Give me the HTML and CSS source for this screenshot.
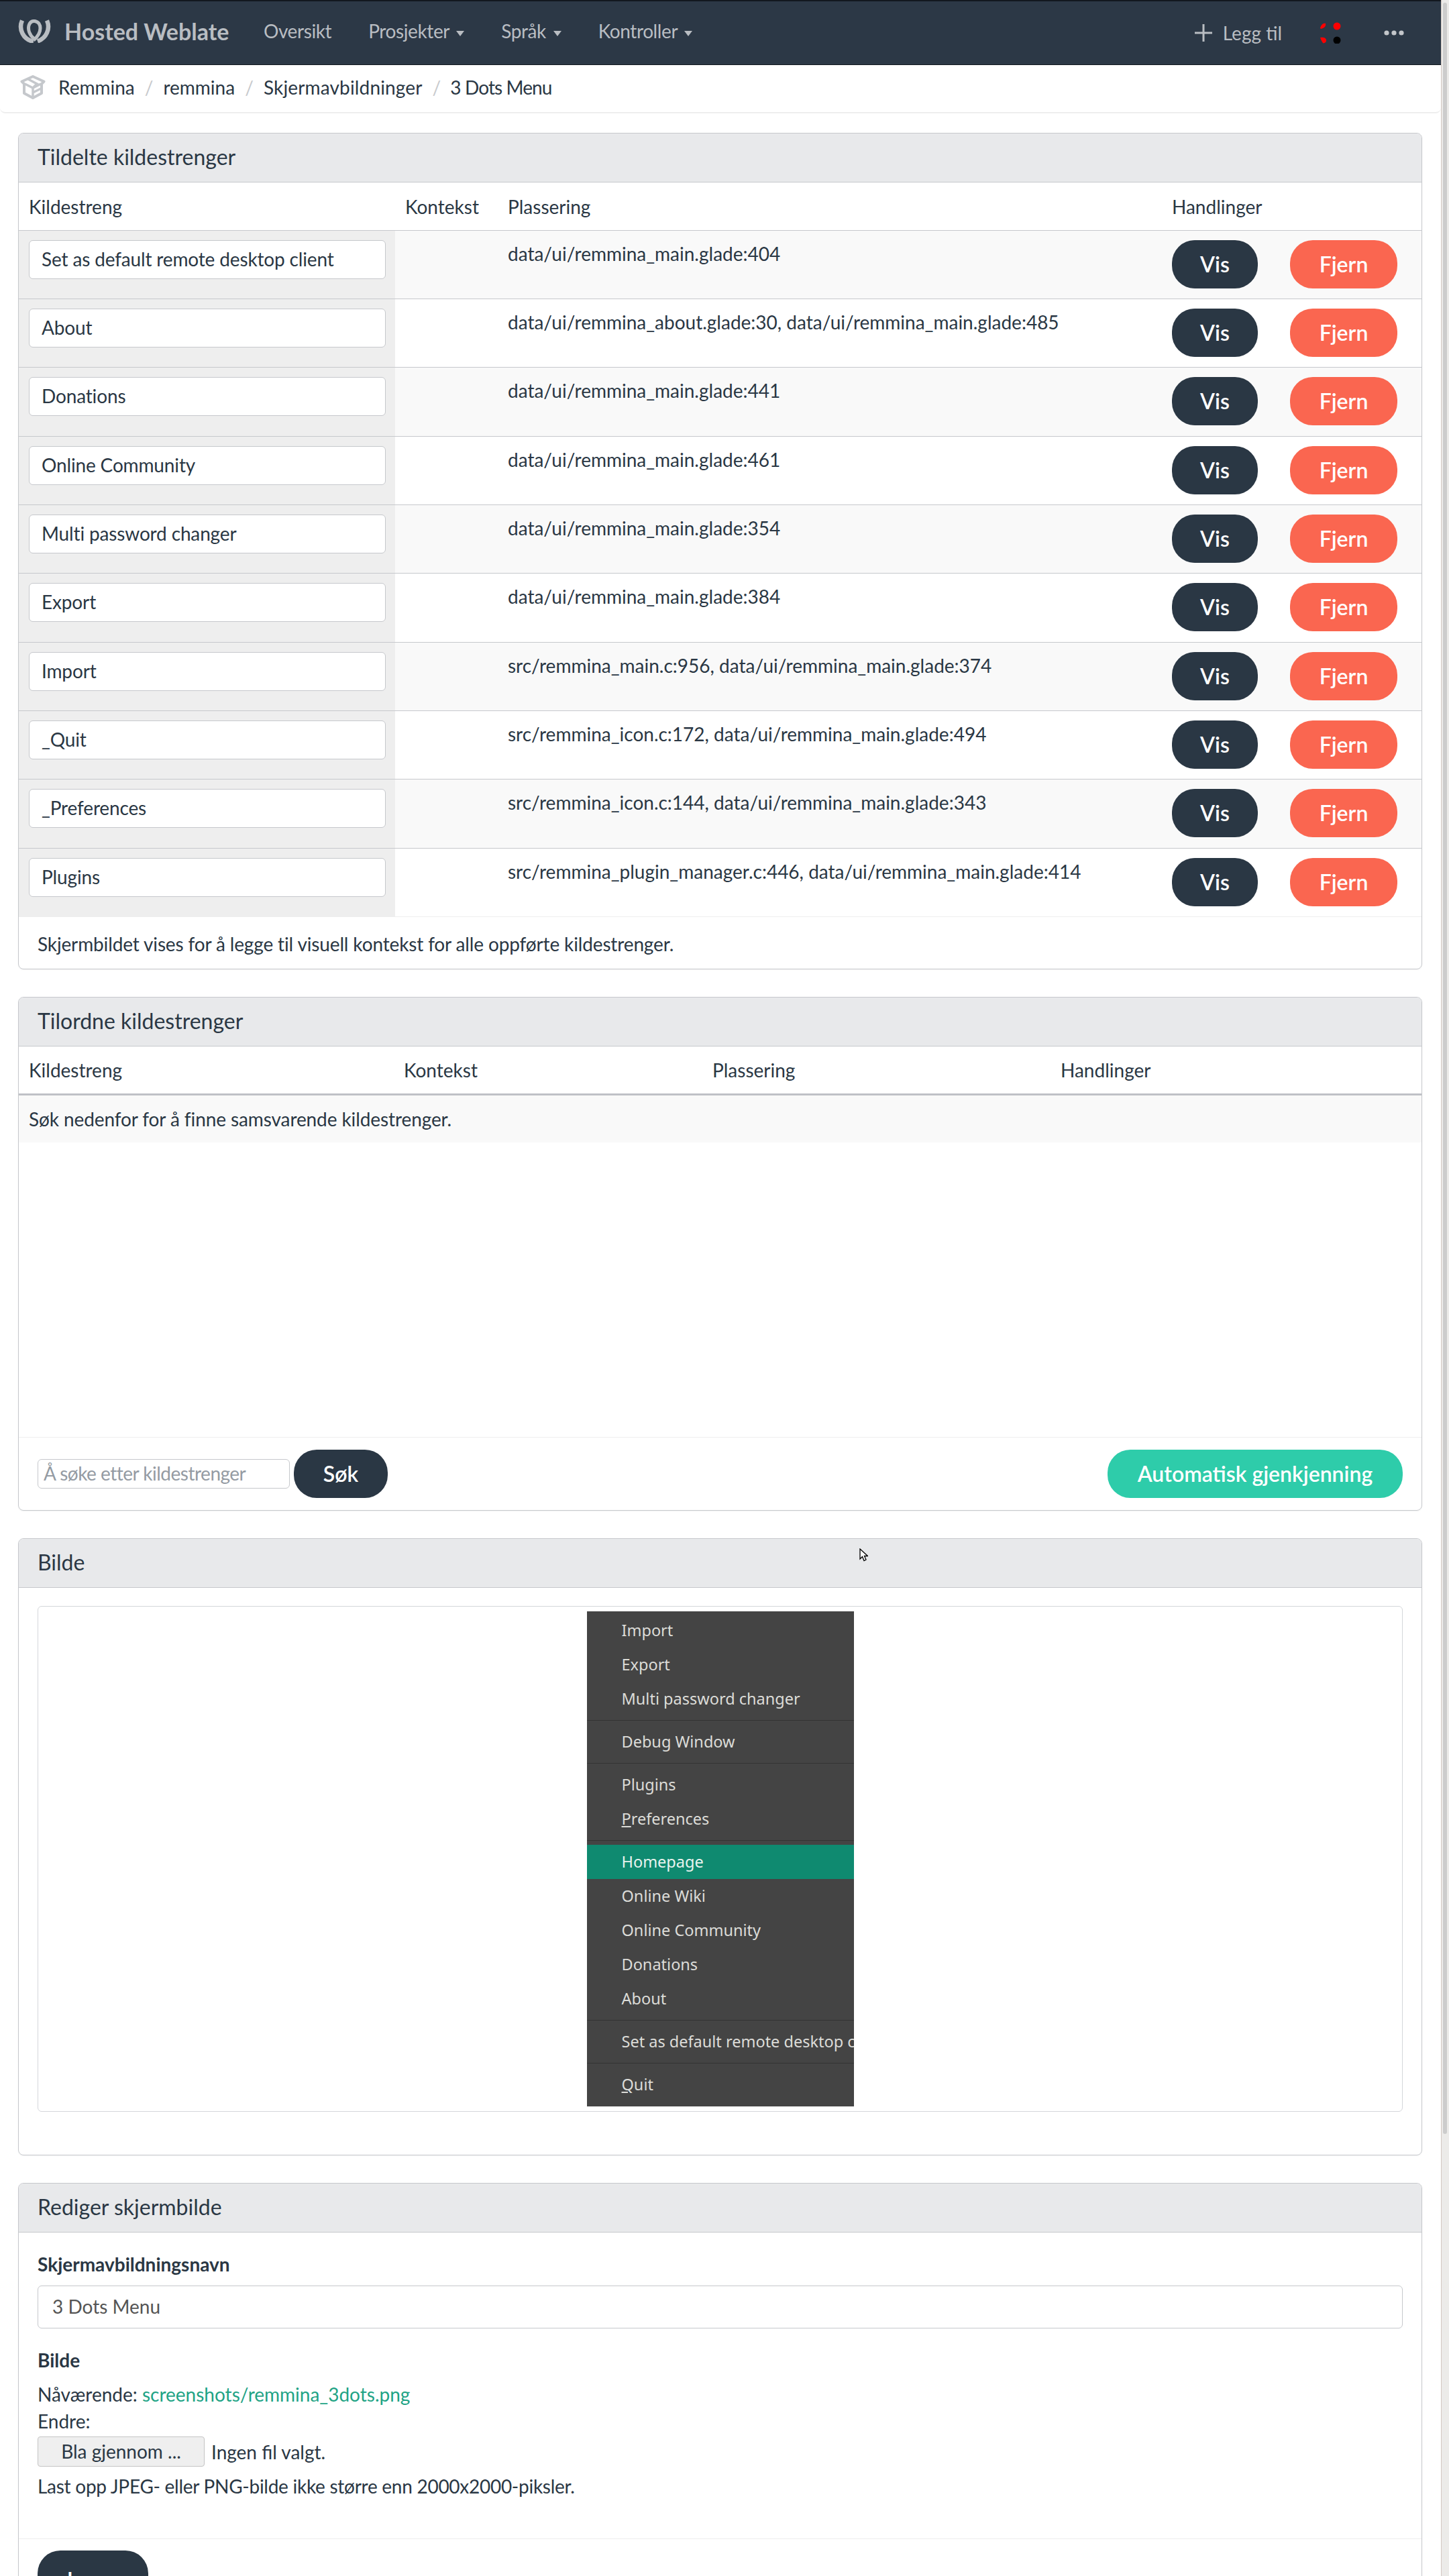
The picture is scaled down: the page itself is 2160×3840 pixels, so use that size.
FILE: index.html
```html
<!DOCTYPE html>
<html lang="nb">
<head>
    <meta charset="UTF-8">
    <title>3 Dots Menu - Hosted Weblate</title>
    <link rel="stylesheet" href="styles.css">
</head>
<body>
<div class="viewport">
<div class="page">
    <nav class="navbar">
        <a class="brand">
            <svg class="brand-logo" viewBox="0 0 49 35" fill="none" stroke="#b9bdc2"><path d="M6 1.5C0.5 14 7 30 23 33" stroke-width="6.5"/><path d="M43 1.5C48.5 14 42 28 29 32.5" stroke-width="6.5"/><path d="M24 29C16.5 23 14.5 15 16 9 17.5 4 21 2 25 2.500 30.500 3.500 33 8 33 13 33 20 29 26 23 31" stroke-width="5"/></svg>
            <span>Hosted Weblate</span>
        </a>
        <ul class="nav-links">
            <li>Oversikt</li>
            <li>Prosjekter <i class="caret"></i></li>
            <li>Språk <i class="caret"></i></li>
            <li>Kontroller <i class="caret"></i></li>
        </ul>
        <div class="nav-right">
            <span class="add-link"><svg class="plus" viewBox="0 0 26 26"><path d="M13 0V26M0 13H26" stroke="#b9bdc2" stroke-width="3"/></svg>Legg til</span>
            <svg class="avatar" viewBox="0 0 32 32"><path d="M1 9 C2 5 5 1 9 2 C10 6 7 9 2 10 Z" fill="#f00"/><circle cx="26" cy="6" r="5.5" fill="#f00"/><path d="M1 23 C5 22 10 23 10 27 C10 31 6 32 5 31 C3 28 2 26 1 23 Z" fill="#f00"/><circle cx="26" cy="27" r="5.5" fill="#000"/></svg>
            <svg class="more" viewBox="0 0 30 8"><circle cx="4" cy="4" r="3.6"/><circle cx="15" cy="4" r="3.6"/><circle cx="26" cy="4" r="3.6"/></svg>
        </div>
    </nav>

    <ol class="breadcrumb">
        <li class="crumb-icon"><svg viewBox="0 0 38 36"><path d="M19 2 35.500 9.500 32 13V27L19 34 6 27V13L2.500 9.500Z" fill="none" stroke="#c5c8cc" stroke-width="4" stroke-linejoin="round"/><path d="M7 13 19 19 31 13M19 19V33M12 6 25 13 19 19M19 26 31 20" fill="none" stroke="#c5c8cc" stroke-width="3.500"/></svg></li>
        <li>Remmina</li>
        <li>remmina</li>
        <li class="crumb-wide">Skjermavbildninger</li>
        <li class="crumb-last">3 Dots Menu</li>
    </ol>

    <main class="content">
        <section class="panel">
            <h4 class="panel-heading">Tildelte kildestrenger</h4>
            <table class="strings">
                <colgroup><col class="c-src"><col class="c-ctx"><col class="c-loc"><col></colgroup>
                <thead><tr><th>Kildestreng</th><th>Kontekst</th><th>Plassering</th><th>Handlinger</th></tr></thead>
                <tbody>
                    <tr><td class="src"><input class="src-input" value="Set as default remote desktop client"></td><td></td><td>data/ui/remmina_main.glade:404</td><td><a class="btn btn-dark btn-vis">Vis</a><a class="btn btn-red btn-del">Fjern</a></td></tr>
                    <tr><td class="src"><input class="src-input" value="About"></td><td></td><td>data/ui/remmina_about.glade:30, data/ui/remmina_main.glade:485</td><td><a class="btn btn-dark btn-vis">Vis</a><a class="btn btn-red btn-del">Fjern</a></td></tr>
                    <tr><td class="src"><input class="src-input" value="Donations"></td><td></td><td>data/ui/remmina_main.glade:441</td><td><a class="btn btn-dark btn-vis">Vis</a><a class="btn btn-red btn-del">Fjern</a></td></tr>
                    <tr><td class="src"><input class="src-input" value="Online Community"></td><td></td><td>data/ui/remmina_main.glade:461</td><td><a class="btn btn-dark btn-vis">Vis</a><a class="btn btn-red btn-del">Fjern</a></td></tr>
                    <tr><td class="src"><input class="src-input" value="Multi password changer"></td><td></td><td>data/ui/remmina_main.glade:354</td><td><a class="btn btn-dark btn-vis">Vis</a><a class="btn btn-red btn-del">Fjern</a></td></tr>
                    <tr><td class="src"><input class="src-input" value="Export"></td><td></td><td>data/ui/remmina_main.glade:384</td><td><a class="btn btn-dark btn-vis">Vis</a><a class="btn btn-red btn-del">Fjern</a></td></tr>
                    <tr><td class="src"><input class="src-input" value="Import"></td><td></td><td>src/remmina_main.c:956, data/ui/remmina_main.glade:374</td><td><a class="btn btn-dark btn-vis">Vis</a><a class="btn btn-red btn-del">Fjern</a></td></tr>
                    <tr><td class="src"><input class="src-input" value="_Quit"></td><td></td><td>src/remmina_icon.c:172, data/ui/remmina_main.glade:494</td><td><a class="btn btn-dark btn-vis">Vis</a><a class="btn btn-red btn-del">Fjern</a></td></tr>
                    <tr><td class="src"><input class="src-input" value="_Preferences"></td><td></td><td>src/remmina_icon.c:144, data/ui/remmina_main.glade:343</td><td><a class="btn btn-dark btn-vis">Vis</a><a class="btn btn-red btn-del">Fjern</a></td></tr>
                    <tr><td class="src"><input class="src-input" value="Plugins"></td><td></td><td>src/remmina_plugin_manager.c:446, data/ui/remmina_main.glade:414</td><td><a class="btn btn-dark btn-vis">Vis</a><a class="btn btn-red btn-del">Fjern</a></td></tr>
                </tbody>
            </table>
            <div class="panel-note">Skjermbildet vises for å legge til visuell kontekst for alle oppførte kildestrenger.</div>
        </section>

        <section class="panel">
            <h4 class="panel-heading">Tilordne kildestrenger</h4>
            <table class="assign">
                <colgroup><col class="a-src"><col class="a-ctx"><col class="a-loc"><col></colgroup>
                <thead><tr><th>Kildestreng</th><th>Kontekst</th><th>Plassering</th><th>Handlinger</th></tr></thead>
                <tbody><tr><td colspan="4">Søk nedenfor for å finne samsvarende kildestrenger.</td></tr></tbody>
            </table>
            <div class="assign-space"></div>
            <div class="panel-footer search-bar">
                <input class="search-input" placeholder="Å søke etter kildestrenger">
                <a class="btn btn-dark btn-search">Søk</a>
                <a class="btn btn-green btn-auto">Automatisk gjenkjenning</a>
            </div>
        </section>

        <section class="panel">
            <h4 class="panel-heading">Bilde</h4>
            <div class="panel-body shot-body">
                <div class="thumbnail">
                    <div class="app-menu">
                        <div class="mi">Import</div>
                        <div class="mi">Export</div>
                        <div class="mi">Multi password changer</div>
                        <div class="msep"></div>
                        <div class="mi">Debug Window</div>
                        <div class="msep"></div>
                        <div class="mi">Plugins</div>
                        <div class="mi"><u>P</u>references</div>
                        <div class="msep"></div>
                        <div class="mi mi-active">Homepage</div>
                        <div class="mi">Online Wiki</div>
                        <div class="mi">Online Community</div>
                        <div class="mi">Donations</div>
                        <div class="mi">About</div>
                        <div class="msep"></div>
                        <div class="mi">Set as default remote desktop client</div>
                        <div class="msep"></div>
                        <div class="mi"><u>Q</u>uit</div>
                    </div>
                </div>
            </div>
        </section>

        <section class="panel">
            <h4 class="panel-heading">Rediger skjermbilde</h4>
            <div class="panel-body edit-body">
                <label class="field-label">Skjermavbildningsnavn</label>
                <input class="name-input" value="3 Dots Menu">
                <label class="field-label image-label">Bilde</label>
                <div class="line">Nåværende: <a class="link">screenshots/remmina_3dots.png</a></div>
                <div class="line">Endre:</div>
                <div class="file-row"><span class="file-btn">Bla gjennom ...</span><span>Ingen fil valgt.</span></div>
                <div class="line help">Last opp JPEG- eller PNG-bilde ikke større enn 2000x2000-piksler.</div>
            </div>
            <div class="panel-footer save-bar"><a class="btn btn-dark btn-save">Lagre</a></div>
        </section>
    </main>
</div>
<div class="scrollbar"><div class="scroll-thumb"></div></div>
<svg class="mouse-cursor" viewBox="0 0 13 20"><path d="M1 1V16L4.500 12.500 7 18.500 10 17 7.500 11.500H12.500Z" fill="#fff" stroke="#000" stroke-width="1.300"/></svg>
</div>
</body>
</html>
```
FILE: styles.css
```css
* {
    box-sizing: border-box;
}

html, body {
    margin: 0;
    height: 3840px;
    overflow: hidden;
    background: #fff;
}

body {
    font-family: Lato, "Noto Sans", sans-serif;
    font-size: 28px;
    line-height: 40px;
    color: #2a3744;
}

.viewport {
    position: relative;
    display: flex;
    height: 3840px;
    overflow: hidden;
}

.page {
    width: 2148px;
    flex: none;
}

.scrollbar {
    flex: 1;
    background: #ecebe9;
    border-left: 1px solid #d2c8c2;
    padding: 4px 3px 0 2px;
}

.scroll-thumb {
    height: 3177px;
    background: #cccccc;
    border-radius: 3px;
}

.mouse-cursor {
    position: absolute;
    left: 1281px;
    top: 2308px;
    width: 13px;
    height: 20px;
}

/* navbar */
.navbar {
    display: flex;
    align-items: center;
    height: 97px;
    background: #2c3846;
    border-top: 2px solid #12181f;
    border-bottom: 1px solid #12181f;
    color: #b9bdc2;
}

.brand {
    display: flex;
    align-items: center;
    padding-left: 27px;
    width: 393px;
    margin-bottom: 5px;
    font-size: 34px;
    font-weight: 700;
}

.brand-logo {
    width: 49px;
    height: 35px;
    margin-right: 20px;
}

.nav-links {
    display: flex;
    list-style: none;
    margin: 0 0 6px;
    padding: 0;
    letter-spacing: -0.4px;
}

.nav-links li {
    margin-right: 55px;
}

.caret {
    display: inline-block;
    width: 0;
    height: 0;
    margin-left: 4px;
    vertical-align: middle;
    border-top: 8px solid #b9bdc2;
    border-left: 6px solid transparent;
    border-right: 6px solid transparent;
}

.nav-right {
    display: flex;
    align-items: center;
    margin-left: auto;
    padding-right: 55px;
}

.add-link {
    display: flex;
    align-items: center;
}

.plus {
    width: 26px;
    height: 26px;
    margin-right: 16px;
}

.avatar {
    width: 32px;
    height: 32px;
    margin: 0 64px 0 56px;
}

.more {
    width: 30px;
    height: 8px;
    fill: #c3c6ca;
}

/* breadcrumb */
.breadcrumb {
    display: flex;
    align-items: center;
    list-style: none;
    height: 72px;
    margin: 0 0 29px;
    padding: 0 0 4px 30px;
    border-bottom: 2px solid #eeeeee;
    border-radius: 0 0 8px 8px;
}

.crumb-icon svg {
    display: block;
    width: 38px;
    height: 36px;
    margin-right: 19px;
}

.breadcrumb li + li + li::before {
    content: "/";
    color: #c8cacd;
    margin: 0 15px;
}

.crumb-wide {
    letter-spacing: 0.15px;
}

.crumb-last {
    letter-spacing: -0.9px;
}

/* panels */
.content {
    padding: 0 28px 0 27px;
}

.panel {
    margin-bottom: 41px;
    border: 1px solid #c6c8cc;
    border-radius: 8px;
    box-shadow: 0 1px 2px rgba(0, 0, 0, 0.05);
    overflow: hidden;
}

.panel-heading {
    margin: 0;
    height: 73px;
    padding: 0 28px;
    font-size: 32px;
    font-weight: 400;
    line-height: 70px;
    background: #e8e9eb;
    border-bottom: 1px solid #c6c8cc;
}

.panel-note {
    height: 77px;
    padding: 20px 28px 0;
    letter-spacing: -0.14px;
}

.panel-footer {
    border-top: 1px solid #eeeeee;
}

.panel-body {
    padding: 27px 28px;
}

/* tables */
table {
    width: 100%;
    border-collapse: separate;
    border-spacing: 0;
    table-layout: fixed;
}

th {
    height: 72px;
    padding: 0 15px;
    text-align: left;
    font-weight: 400;
    border-bottom: 1px solid #c6c8cc;
}

.strings td {
    height: 102px;
    padding: 14px 15px 0;
    vertical-align: top;
    border-bottom: 1px solid #c6c8cc;
}

.strings tr:nth-child(3n) td {
    height: 103px;
}

.strings tr:last-child td {
    border-bottom-color: #eeeeee;
}

.strings tbody tr:nth-child(odd) {
    background: #f9f9f9;
}

.strings td.src {
    background: #eeeeee;
}

.c-src { width: 561px; }
.c-ctx { width: 153px; }
.c-loc { width: 990px; }

.a-src { width: 559px; }
.a-ctx { width: 460px; }
.a-loc { width: 519px; }

.src-input {
    display: block;
    width: 532px;
    height: 58px;
    padding: 0 18px 3px;
    font: inherit;
    letter-spacing: -0.15px;
    color: inherit;
    background: #fff;
    border: 1px solid #c6c8cc;
    border-radius: 6px;
}

.assign th {
    height: 73px;
    border-bottom: 3px solid #bfc1c6;
}

.assign td {
    height: 70px;
    padding: 0 15px;
    background: #f9f9f9;
    letter-spacing: -0.1px;
}

.assign-space {
    height: 439px;
}

/* buttons */
.btn {
    display: inline-block;
    height: 72px;
    border-radius: 34px;
    text-align: center;
    line-height: 72px;
    font-size: 32px;
    font-weight: 600;
    color: #fff;
}

.btn-dark { background: #2a3744; }
.btn-red { background: #fa6650; }
.btn-green { background: #2eccaa; }

.btn-vis {
    width: 128px;
    margin-right: 48px;
}

.btn-del { width: 160px; }

/* search bar */
.search-bar {
    display: flex;
    align-items: center;
    height: 109px;
    padding: 0 28px;
}

.search-input {
    width: 376px;
    height: 44px;
    padding: 0 8px 3px;
    font: inherit;
    font-size: 28px;
    border: 1px solid #c6c8cc;
    border-radius: 6px;
}

.search-input::placeholder {
    color: #949ba3;
    letter-spacing: -0.5px;
}

.btn-search {
    width: 140px;
    margin-left: 6px;
}

.btn-auto {
    width: 440px;
    margin-left: auto;
}

/* screenshot */
.shot-body {
    height: 845px;
}

.thumbnail {
    display: flex;
    justify-content: center;
    height: 754px;
    padding: 7px 0;
    border: 1px solid #d4d6da;
    border-radius: 6px;
}

.app-menu {
    width: 398px;
    height: 738px;
    padding-top: 3px;
    background: #444444;
    overflow: hidden;
    font-family: "Noto Sans", sans-serif;
    font-size: 23.5px;
    color: #dcdcd8;
}

.mi {
    height: 51px;
    padding-left: 52px;
    line-height: 51px;
    white-space: nowrap;
}

.mi-active {
    background: #0f8a70;
    color: #e8f3ee;
}

.msep {
    height: 13px;
    padding-top: 6px;
}

.msep::before {
    content: "";
    display: block;
    height: 1px;
    background: #333333;
}

/* edit form */
.edit-body {
    height: 456px;
    padding-top: 27px;
}

.field-label {
    display: block;
    font-weight: 700;
}

.name-input {
    display: block;
    width: 100%;
    height: 64px;
    margin-top: 12px;
    padding: 0 21px 3px;
    font: inherit;
    color: #555555;
    border: 1px solid #c6c8cc;
    border-radius: 6px;
}

.image-label {
    margin-top: 27px;
    margin-bottom: 11px;
}

.link {
    color: #1fa385;
}

.file-row {
    display: flex;
    align-items: center;
    gap: 10px;
    margin-top: 3px;
}

.file-btn {
    width: 249px;
    height: 45px;
    line-height: 43px;
    text-align: center;
    background: #efefef;
    border: 1px solid #c4c4c4;
    border-radius: 4px;
}

.help {
    margin-top: 9px;
    letter-spacing: -0.27px;
}

.save-bar {
    padding: 17px 28px;
}

.btn-save {
    width: 165px;
    height: 88px;
    line-height: 88px;
}
```
